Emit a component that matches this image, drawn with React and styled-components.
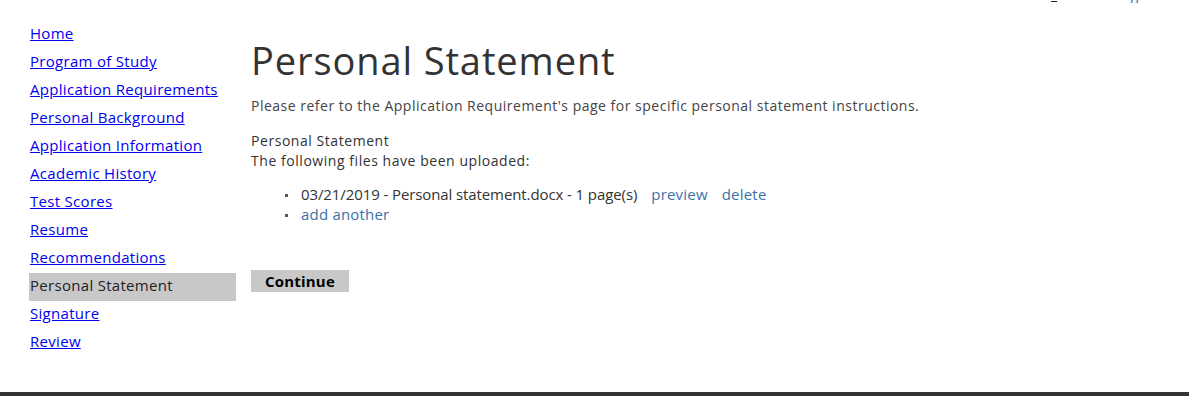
import React from "react";
import styled, { createGlobalStyle } from "styled-components";

const GlobalStyle = createGlobalStyle`
  html, body {
    margin: 0;
    padding: 0;
    background: #fff;
  }
  body {
    font-family: "Open Sans", "Noto Sans", "Liberation Sans", sans-serif;
    color: #333;
  }
  * {
    box-sizing: border-box;
  }
`;

const navItems = [
  "Home",
  "Program of Study",
  "Application Requirements",
  "Personal Background",
  "Application Information",
  "Academic History",
  "Test Scores",
  "Resume",
  "Recommendations",
  "Personal Statement",
  "Signature",
  "Review",
];

const files = [
  { date: "03/21/2019", name: "Personal statement.docx", pages: 1 },
];

const App = () => {
  return (
    <StPage>
      <GlobalStyle />
      <StTopBar>
        <span className="user">_</span>
        <a href="#">Log out</a>
      </StTopBar>
      <StBody>
        <StSideNav>
          {navItems.map((item) => (
            <StNavItem key={item} $active={item === "Personal Statement"}>
              {item === "Personal Statement" ? (
                <span>{item}</span>
              ) : (
                <a href="#">{item}</a>
              )}
            </StNavItem>
          ))}
        </StSideNav>
        <StMain>
          <h1>Personal Statement</h1>
          <p>
            Please refer to the Application Requirement's page for specific
            personal statement instructions.
          </p>
          <p className="label">
            Personal Statement
            <br />
            The following files have been uploaded:
          </p>
          <StFileList>
            {files.map((f) => (
              <li key={f.name}>
                {f.date} - {f.name} - {f.pages} page(s)
                <a href="#">preview</a>
                <a href="#">delete</a>
              </li>
            ))}
            <li>
              <a href="#" className="first">
                add another
              </a>
            </li>
          </StFileList>
          <StButton type="button">Continue</StButton>
        </StMain>
      </StBody>
      <StFooter />
    </StPage>
  );
};

export default App;

const StPage = styled.div`
  display: flex;
  flex-direction: column;
  min-height: 396px;
`;

const StTopBar = styled.div`
  display: flex;
  justify-content: flex-end;
  align-items: flex-end;
  gap: 58px;
  height: 3px;
  overflow: hidden;
  padding-right: 25px;
  font-size: 14px;
  line-height: 20px;
  .user {
    color: #111;
    margin-bottom: -2px;
  }
  a {
    color: #337ab7;
    text-decoration: none;
    margin-bottom: -2px;
  }
`;

const StBody = styled.div`
  display: flex;
  gap: 15px;
  padding: 18px 0 0 29px;
  flex: 1;
`;

const StSideNav = styled.ul`
  list-style: none;
  margin: 0;
  padding: 0;
  width: 207px;
  flex-shrink: 0;
`;

const StNavItem = styled.li`
  height: 28px;
  line-height: 24px;
  padding: 0 0 4px 1px;
  font-size: 15px;
  letter-spacing: 0.3px;
  background: ${(p) => (p.$active ? "#c8c8c8" : "transparent")};
  a {
    color: #0000ee;
    text-decoration: underline;
  }
  span {
    color: #222;
  }
`;

const StMain = styled.main`
  flex: 1;
  h1 {
    margin: 16px 0 0;
    font-size: 38px;
    line-height: 46px;
    font-weight: 400;
    letter-spacing: 0.9px;
    color: #333;
  }
  p {
    margin: 13px 0 0;
    font-size: 14px;
    line-height: 20px;
    letter-spacing: 0.5px;
    color: #444;
  }
  p.label {
    margin-top: 15px;
    letter-spacing: 0.55px;
    color: #333;
  }
`;

const StFileList = styled.ul`
  list-style: none;
  margin: 13px 0 0;
  padding: 0 0 0 50px;
  font-size: 15px;
  line-height: 20px;
  letter-spacing: -0.1px;
  color: #333;
  li {
    position: relative;
  }
  li::before {
    content: "";
    position: absolute;
    left: -16px;
    top: 10px;
    width: 3px;
    height: 3px;
    background: #555;
  }
  a {
    color: #3d72a8;
    text-decoration: none;
    margin-left: 14px;
    letter-spacing: 0.2px;
  }
  a.first {
    margin-left: 0;
  }
`;

const StButton = styled.button`
  display: block;
  margin-top: 46px;
  width: 98px;
  height: 22px;
  padding: 0;
  border: none;
  background: #c8c8c8;
  color: #000;
  font-family: inherit;
  font-size: 15px;
  font-weight: 700;
  letter-spacing: 0.2px;
  cursor: pointer;
`;

const StFooter = styled.footer`
  height: 4px;
  background: #333;
`;
